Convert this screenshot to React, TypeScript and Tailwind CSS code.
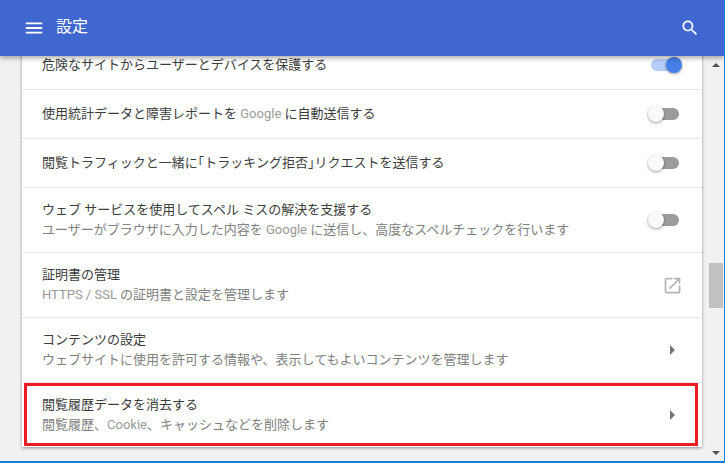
import type { ReactNode } from 'react';

const font = { fontFamily: '"Roboto", "Noto Sans CJK JP", sans-serif' };

function Toggle({ on }: { on?: boolean }) {
  return (
    <div className="relative w-[35px] h-[16px] mr-[20px] flex items-center">
      <div className={`ml-[4px] w-[28px] h-[12px] rounded-full ${on ? 'bg-[#b6cdf7]' : 'bg-[#9b9b9b]'}`} />
      <div
        className={`absolute top-0 w-[16px] h-[16px] rounded-full shadow-[0_1px_3px_rgba(0,0,0,0.4)] ${on ? 'right-0 bg-[#4580e8]' : 'left-[1px] bg-[#fafafa]'}`}
      />
    </div>
  );
}

function Arrow() {
  return <div className="mr-[27px] w-0 h-0 border-y-[5px] border-y-transparent border-l-[5px] border-l-[#757575]" />;
}

function Row({
  title,
  sub,
  h,
  right,
  last,
}: {
  title: ReactNode;
  sub?: ReactNode;
  h: string;
  right: ReactNode;
  last?: boolean;
}) {
  return (
    <div className={`flex items-center justify-between pl-[20px] ${h} ${last ? '' : 'border-b border-[#e8e8e8]'}`}>
      <div className="flex flex-col">
        <div className="text-[13px] leading-[20px] text-[#3c3c3c]">{title}</div>
        {sub && <div className="text-[13px] leading-[20px] text-[#808080]">{sub}</div>}
      </div>
      {right}
    </div>
  );
}

const G = ({ children }: { children: string }) => <span className="text-[#9a9a9a]">{children}</span>;
const Half = ({ children }: { children: string }) => <span className="[font-feature-settings:'halt']">{children}</span>;

export default function App() {
  return (
    <div className="w-[725px] h-[463px] relative overflow-hidden bg-[#f1f1f1] flex flex-col border-r border-b-2 border-[#1a7fd6]" style={font}>
      <header className="relative z-10 h-[56px] shrink-0 bg-[#3f67cf] flex items-center justify-between pl-[23px] pr-[24px] text-white shadow-[0_2px_5px_rgba(0,0,0,0.35)]">
        <div className="flex items-center gap-[11px]">
          <svg width="22" height="22" viewBox="0 0 24 24" fill="currentColor">
            <path d="M3 18h18v-2H3v2zm0-5h18v-2H3v2zm0-7v2h18V6H3z" />
          </svg>
          <span className="text-[16px] leading-[22px] -mt-[2px]">設定</span>
        </div>
        <svg width="20" height="20" viewBox="0 0 24 24" fill="currentColor">
          <path d="M15.5 14h-.79l-.28-.27C15.41 12.59 16 11.11 16 9.5 16 5.91 13.09 3 9.5 3S3 5.91 3 9.5 5.91 16 9.5 16c1.61 0 3.09-.59 4.23-1.57l.27.28v.79l5 4.99L20.49 19l-4.99-5zm-6 0C7.01 14 5 11.99 5 9.5S7.01 5 9.5 5 14 7.01 14 9.5 11.99 14 9.5 14z" />
        </svg>
      </header>

      <div className="flex flex-1 min-h-0">
        <div className="w-[707px] pl-[22px] pr-[5px] min-h-0">
          <div className="relative -mt-[15px] bg-white shadow-[0_1px_3px_rgba(0,0,0,0.4)]">
            <Row h="h-[49px]" title="危険なサイトからユーザーとデバイスを保護する" right={<Toggle on />} />
            <Row
              h="h-[49px]"
              title={<>使用統計データと障害レポートを <G>Google</G> に自動送信する</>}
              right={<Toggle />}
            />
            <Row
              h="h-[49px]"
              title={<>閲覧トラフィックと一緒に<Half>「</Half>トラッキング拒否<Half>」</Half>リクエストを送信する</>}
              right={<Toggle />}
            />
            <Row
              h="h-[65px]"
              title="ウェブ サービスを使用してスペル ミスの解決を支援する"
              sub={<>ユーザーがブラウザに入力した内容を <G>Google</G> に送信し、高度なスペルチェックを行います</>}
              right={<Toggle />}
            />
            <Row
              h="h-[65px]"
              title="証明書の管理"
              sub={<><G>HTTPS / SSL</G> の証明書と設定を管理します</>}
              right={
                <svg width="21" height="21" viewBox="0 0 24 24" fill="#b5b5b5" className="mr-[19px]">
                  <path d="M19 19H5V5h7V3H5c-1.11 0-2 .9-2 2v14c0 1.1.89 2 2 2h14c1.1 0 2-.9 2-2v-7h-2v7zM14 3v2h3.59l-9.83 9.83 1.41 1.41L19 6.41V10h2V3h-7z" />
                </svg>
              }
            />
            <Row
              h="h-[65px]"
              title="コンテンツの設定"
              sub="ウェブサイトに使用を許可する情報や、表示してもよいコンテンツを管理します"
              right={<Arrow />}
            />
            <Row
              last
              h="h-[64px]"
              title="閲覧履歴データを消去する"
              sub={<>閲覧履歴、<G>Cookie</G>、キャッシュなどを削除します</>}
              right={<Arrow />}
            />
            <div className="absolute left-[2px] right-[4px] bottom-[1px] h-[63px] border-[3px] border-[#ed1c24]" />
          </div>
        </div>

        <div className="w-[17px] bg-[#f1f1f1] flex flex-col items-center relative">
          <div className="mt-[7px] w-0 h-0 border-x-[4px] border-x-transparent border-b-[4px] border-b-[#505050]" />
          <div className="absolute top-[207px] left-0 w-[14px] ml-[2px] h-[45px] bg-[#c1c1c1]" />
          <div className="mt-auto mb-[6px] w-0 h-0 border-x-[4px] border-x-transparent border-t-[4px] border-t-[#505050]" />
        </div>
      </div>
    </div>
  );
}
